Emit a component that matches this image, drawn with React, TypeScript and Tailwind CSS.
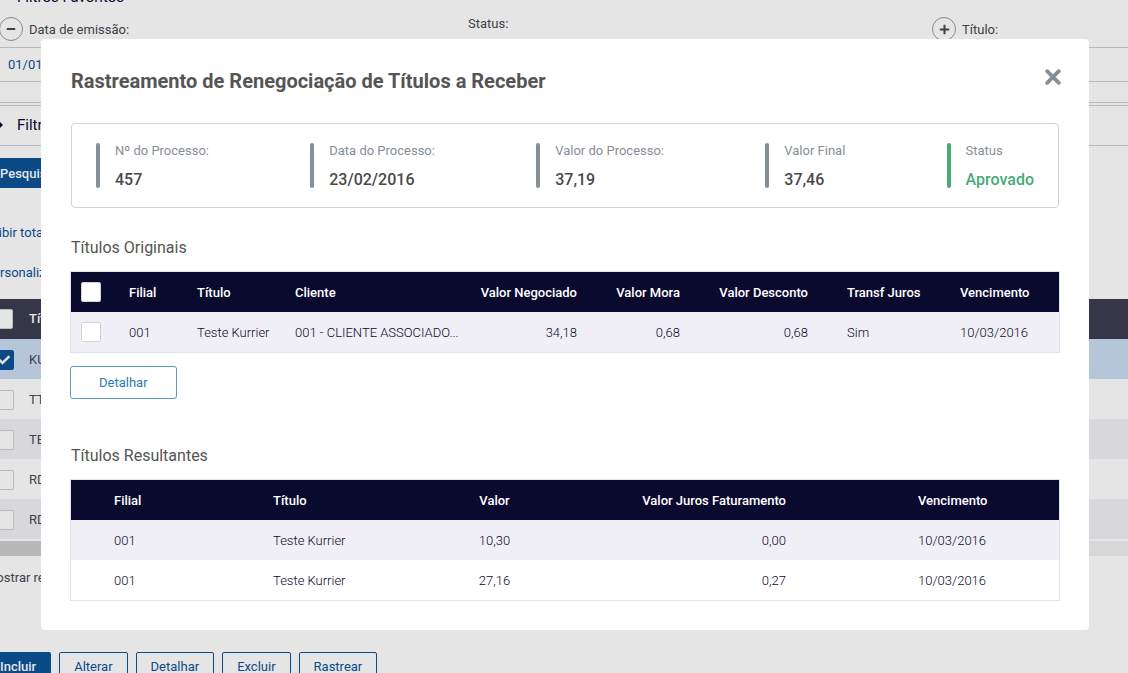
import React from "react";
import { FaCheck, FaMinus, FaPlus } from "react-icons/fa";

type Align = "left" | "right" | "center";

interface Column {
  label: string;
  width: string;
  pad: string;
  align: Align;
}

const alignClass: Record<Align, string> = {
  left: "text-left",
  right: "text-right",
  center: "text-center",
};

const summary = [
  { label: "Nº do Processo:", value: "457" },
  { label: "Data do Processo:", value: "23/02/2016" },
  { label: "Valor do Processo:", value: "37,19" },
  { label: "Valor Final", value: "37,46" },
  { label: "Status", value: "Aprovado", positive: true },
];

const originalColumns: Column[] = [
  { label: "Filial", width: "w-[68px]", pad: "px-[10px]", align: "left" },
  { label: "Título", width: "w-[98px]", pad: "px-[10px]", align: "left" },
  { label: "Cliente", width: "w-[184px]", pad: "px-[10px]", align: "left" },
  { label: "Valor Negociado", width: "w-[118px]", pad: "px-[10px]", align: "right" },
  { label: "Valor Mora", width: "w-[103px]", pad: "px-[10px]", align: "right" },
  { label: "Valor Desconto", width: "w-[128px]", pad: "px-[10px]", align: "right" },
  { label: "Transf Juros", width: "w-[132px]", pad: "pl-[29px]", align: "left" },
  { label: "Vencimento", width: "w-[109px]", pad: "px-[10px]", align: "left" },
];

const originalRows = [
  ["001", "Teste Kurrier", "001 - CLIENTE ASSOCIADO...", "34,18", "0,68", "0,68", "Sim", "10/03/2016"],
];

const resultColumns: Column[] = [
  { label: "Filial", width: "w-[192px]", pad: "pl-[43px]", align: "left" },
  { label: "Título", width: "w-[180px]", pad: "px-[10px]", align: "left" },
  { label: "Valor", width: "w-[103px]", pad: "px-[10px]", align: "center" },
  { label: "Valor Juros Faturamento", width: "w-[250px]", pad: "px-[10px]", align: "right" },
  { label: "Vencimento", width: "w-[263px]", pad: "pl-[122px]", align: "left" },
];

const resultRows = [
  ["001", "Teste Kurrier", "10,30", "0,00", "10/03/2016"],
  ["001", "Teste Kurrier", "27,16", "0,27", "10/03/2016"],
];

const backgroundRows = [
  { title: "KURRIER", tone: "bg-[#b5c6d9]", checked: true },
  { title: "TTESTE", tone: "", checked: false },
  { title: "TESTE", tone: "bg-[#d7d7dc]", checked: false },
  { title: "RD001", tone: "", checked: false },
  { title: "RD002", tone: "bg-[#d7d7dc]", checked: false },
];

function Checkbox({ label, dim, checked }: { label: string; dim?: boolean; checked?: boolean }) {
  return (
    <span className="relative block size-5">
      <input
        type="checkbox"
        aria-label={label}
        defaultChecked={checked}
        className={
          "peer block size-5 appearance-none rounded-xs border checked:border-[#0a4a87] checked:bg-[#0a4a87] " +
          (dim ? "border-[#b9bbbf] bg-[#e5e5e5]" : "border-[#ced4da] bg-white")
        }
      />
      <FaCheck className="pointer-events-none absolute top-1 left-1 hidden size-3 text-[#e5e5e5] peer-checked:block" />
    </span>
  );
}

function DataTable({ columns, rows, selectable }: { columns: Column[]; rows: string[][]; selectable?: boolean }) {
  return (
    <table className="w-full table-fixed border-collapse text-[13px] leading-5 ring-1 ring-[#dce3ea]">
      <thead>
        <tr className="h-10 bg-[#0a0a2e] text-white">
          {selectable && (
            <th className="w-12 pl-[10px]">
              <Checkbox label="Selecionar todos" />
            </th>
          )}
          {columns.map((c) => (
            <th
              key={c.label}
              className={`${c.width} ${c.pad} ${alignClass[c.align]} pt-[2px] font-medium whitespace-nowrap`}
            >
              {c.label}
            </th>
          ))}
        </tr>
      </thead>
      <tbody>
        {rows.map((row, r) => (
          <tr key={r} className="h-10 text-[#0a0a2e] odd:bg-[#f0eff5] even:bg-white">
            {selectable && (
              <td className="pl-[10px]">
                <Checkbox label={`Selecionar ${row[1]}`} />
              </td>
            )}
            {row.map((cell, i) => (
              <td
                key={i}
                className={`${columns[i].pad} ${alignClass[columns[i].align]} pt-[2px] font-light whitespace-nowrap`}
              >
                {cell}
              </td>
            ))}
          </tr>
        ))}
      </tbody>
    </table>
  );
}

function Page() {
  return (
    <div className="-ml-[15px] text-[13px] leading-5 text-[#3f4145]">
      <h2 className="-mt-[13px] pl-[32px] text-[15px] leading-5 text-[#0a0a2e]">Filtros Favoritos</h2>
      <div className="mt-[10px] flex h-[30px] items-start">
        <div className="flex flex-1 items-center gap-[6px] pl-[14px]">
          <button aria-label="Remover data" className="grid size-6 place-items-center rounded-full border border-[#868a90]">
            <FaMinus className="size-[10px]" />
          </button>
          <span className="pt-px">Data de emissão:</span>
        </div>
        <div className="-mt-[3px] flex-1 pl-[5px]">Status:</div>
        <div className="flex w-[196px] items-center gap-[6px]">
          <button aria-label="Adicionar título" className="grid size-6 place-items-center rounded-full border border-[#868a90]">
            <FaPlus className="size-[11px]" />
          </button>
          <span className="pt-px">Título:</span>
        </div>
      </div>
      <div className="border-y border-[#b7b9c2]">
        <input aria-label="Data de emissão" defaultValue="01/01/2016" className="block h-[33px] w-40 pl-[23px] text-[#0a4a87]" />
      </div>
      <div className="mt-5 h-1 border-y border-[#b7b9c2]" />
      <div className="flex h-10 items-center border-b border-[#b7b9c2] pb-[2px] text-[15px] text-[#0a0a2e]">
        <svg viewBox="0 0 6 8" className="ml-[12px] h-2 w-[6px] fill-current">
          <path d="M2 0l4 4-4 4z" />
        </svg>
        <span className="pl-[14px]">Filtros Avançados</span>
      </div>
      <button className="mt-3 block h-[30px] bg-[#0a4a87] px-[15px] pt-[2px] font-medium text-[#e5e5e5]">Pesquisar</button>
      <div className="mt-[35px] flex flex-col gap-5 text-[#0a4a87]">
        <a href="#totais">Exibir totais</a>
        <a href="#personalizar">Personalizar</a>
      </div>
      <table className="mt-4 w-full table-fixed border-collapse">
        <thead>
          <tr className="h-10 bg-[#353647] text-left text-[#e5e5e5]">
            <th className="w-[44px] pl-[8px]">
              <Checkbox dim label="Selecionar todos os títulos" />
            </th>
            <th className="font-medium">Título</th>
          </tr>
        </thead>
        <tbody>
          {backgroundRows.map((row) => (
            <tr key={row.title} className={`h-10 ${row.tone}`}>
              <td className="pt-[2px] pl-[9px]">
                <Checkbox dim label={row.title} checked={row.checked} />
              </td>
              <td className="pt-[2px]">{row.title}</td>
            </tr>
          ))}
        </tbody>
      </table>
      <div className="mt-[2px] h-[15px] bg-[#d7d7d7]">
        <div className="h-full w-1/2 bg-[#b8b8b8]" />
      </div>
      <p className="mt-3">Mostrar registros</p>
      <div className="mt-16 flex gap-2">
        <button className="h-[30px] rounded-xs bg-[#0a4a87] px-[15px] font-medium text-[#e5e5e5]">Incluir</button>
        {["Alterar", "Detalhar", "Excluir", "Rastrear"].map((label) => (
          <button key={label} className="h-[30px] rounded-xs border border-[#0a4a87] px-[14px] text-[#0a4a87]">
            {label}
          </button>
        ))}
      </div>
    </div>
  );
}

export default function App() {
  return (
    <div className="relative h-screen overflow-hidden bg-[#e5e5e5] font-['Roboto',sans-serif]">
      <Page />
      <div className="absolute inset-0 pt-[39px] pr-[39px] pl-[41px]">
        <section role="dialog" aria-labelledby="dialog-title" className="rounded bg-white px-[30px] pt-7 pb-[30px]">
          <header className="flex items-start justify-between">
            <h1 id="dialog-title" className="text-[20px] leading-7 font-bold text-[#555]">
              Rastreamento de Renegociação de Títulos a Receber
            </h1>
            <button aria-label="Fechar" className="mt-[2px] -mr-[2px] text-[#868e96]">
              <svg viewBox="0 0 16 16" className="size-4" fill="none" stroke="currentColor" strokeWidth="3.8" strokeLinecap="round">
                <path d="M2.2 2.2l11.6 11.6M13.8 2.2L2.2 13.8" />
              </svg>
            </button>
          </header>

          <dl className="mt-[28px] flex justify-between rounded border border-[#ced4da] py-[19px] pr-6 pl-6">
            {summary.map((item) => (
              <div key={item.label} className="flex h-[45px] gap-[15px]">
                <span className={"w-1 rounded-full " + (item.positive ? "bg-[#48ab74]" : "bg-[#868e96]")} />
                <div className="-mt-px flex flex-col gap-[10px]">
                  <dt className="text-[13px] leading-[18px] text-[#868e96]">{item.label}</dt>
                  <dd className={"text-[16px] leading-5 font-medium " + (item.positive ? "text-[#48ab74]" : "text-[#4a4a4a]")}>
                    {item.value}
                  </dd>
                </div>
              </div>
            ))}
          </dl>

          <h2 className="mt-7 mb-3 text-[16px] leading-6 text-[#555]">Títulos Originais</h2>
          <DataTable selectable columns={originalColumns} rows={originalRows} />
          <button className="mt-[14px] -ml-px block h-[33px] rounded-[3px] border border-[#5b9cc2] px-7 pt-px text-[13px] text-[#2a7aab]">
            Detalhar
          </button>

          <h2 className="mt-[45px] mb-3 text-[16px] leading-6 text-[#555]">Títulos Resultantes</h2>
          <DataTable columns={resultColumns} rows={resultRows} />
        </section>
      </div>
    </div>
  );
}
